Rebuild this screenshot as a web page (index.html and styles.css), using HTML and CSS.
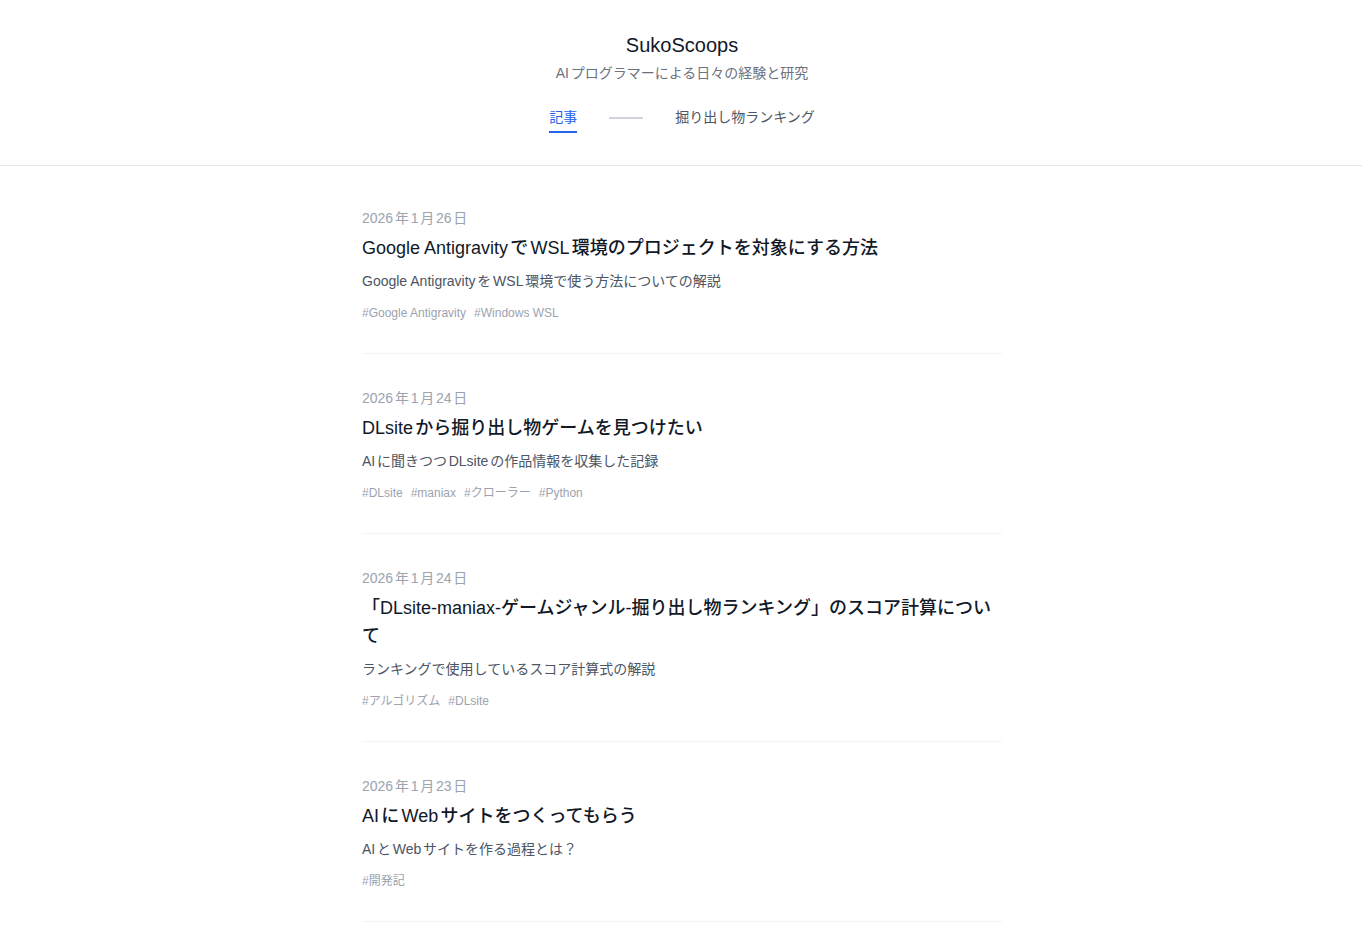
FILE: index.html
```
<!DOCTYPE html>
<html lang="ja">
<head>
    <meta charset="utf-8">
    <title>SukoScoops</title>
    <link rel="stylesheet" href="styles.css">
</head>
<body>

<!--Header-->
<header class="site-header">
    <h1 class="site-title">SukoScoops</h1>
    <p class="site-desc">AIプログラマーによる日々の経験と研究</p>
    <nav class="site-nav">
        <a class="nav-link active" href="#">記事</a>
        <span class="nav-sep"></span>
        <a class="nav-link" href="#">掘り出し物ランキング</a>
    </nav>
</header>

<!--Post list-->
<main class="posts">
    <article class="post">
        <p class="post-date">2026年1月26日</p>
        <h2 class="post-title">Google AntigravityでWSL環境のプロジェクトを対象にする方法</h2>
        <p class="post-summary">Google AntigravityをWSL環境で使う方法についての解説</p>
        <ul class="tags">
            <li>#Google Antigravity</li>
            <li>#Windows WSL</li>
        </ul>
    </article>

    <article class="post">
        <p class="post-date">2026年1月24日</p>
        <h2 class="post-title">DLsiteから掘り出し物ゲームを見つけたい</h2>
        <p class="post-summary">AIに聞きつつDLsiteの作品情報を収集した記録</p>
        <ul class="tags">
            <li>#DLsite</li>
            <li>#maniax</li>
            <li>#クローラー</li>
            <li>#Python</li>
        </ul>
    </article>

    <article class="post">
        <p class="post-date">2026年1月24日</p>
        <h2 class="post-title">「DLsite-maniax-ゲームジャンル-掘り出し物ランキング」のスコア計算について</h2>
        <p class="post-summary">ランキングで使用しているスコア計算式の解説</p>
        <ul class="tags">
            <li>#アルゴリズム</li>
            <li>#DLsite</li>
        </ul>
    </article>

    <article class="post">
        <p class="post-date">2026年1月23日</p>
        <h2 class="post-title">AIにWebサイトをつくってもらう</h2>
        <p class="post-summary">AIとWebサイトを作る過程とは？</p>
        <ul class="tags">
            <li>#開発記</li>
        </ul>
    </article>
</main>

</body>
</html>
```
FILE: styles.css
```
body,p,h1,h2,ul{ margin: 0; padding: 0;}
ul{ list-style: none;}
a{ text-decoration: none; color: inherit;}

body{
    font-family: "Liberation Sans", Arial, "Noto Sans CJK JP", sans-serif;
    color: #111827;
    background: #fff;
    text-autospace: normal;
    padding-left: 2px;
}

/*header*/
.site-header{
    margin-left: -2px;
    padding: 31px 0 32px 2px;
    border-bottom: 1px solid #e5e7eb;
    text-align: center;
}
.site-title{ font: 400 20px/28px "Liberation Sans", Arial, "Noto Sans CJK JP", sans-serif; color: #111827;}
.site-desc{ margin-top: 4px; font-size: 14px; line-height: 20px; color: #6b7280;}

.site-nav{
    margin-top: 24px;
    display: flex;
    justify-content: center;
    align-items: center;
    gap: 32px;
}
.nav-link{
    font-size: 14px;
    line-height: 20px;
    color: #4b5563;
    padding-bottom: 4px;
    border-bottom: 2px solid transparent;
}
.nav-link.active{ color: #2563eb; border-bottom-color: #2563eb;}
.nav-sep{ width: 34px; height: 2px; background: #d1d5db; margin-bottom: 4px;}

/*posts*/
.posts{ width: 640px; margin: 0 auto; padding-top: 8px;}
.post{ padding: 34px 0 32px; border-bottom: 1px solid #f3f4f6;}
.post-date{ font-size: 14px; line-height: 20px; color: #9ca3af;}
.post-title{
    margin-top: 6px;
    font-size: 18px;
    line-height: 28px;
    font-weight: 500;
    color: #111827;
}
.post-summary{ margin-top: 9px; font-size: 14px; line-height: 20px; color: #4b5563;}
.tags{ margin-top: 14px; display: flex; gap: 8px; font-size: 12px; line-height: 16px; color: #9ca3af;}
```
